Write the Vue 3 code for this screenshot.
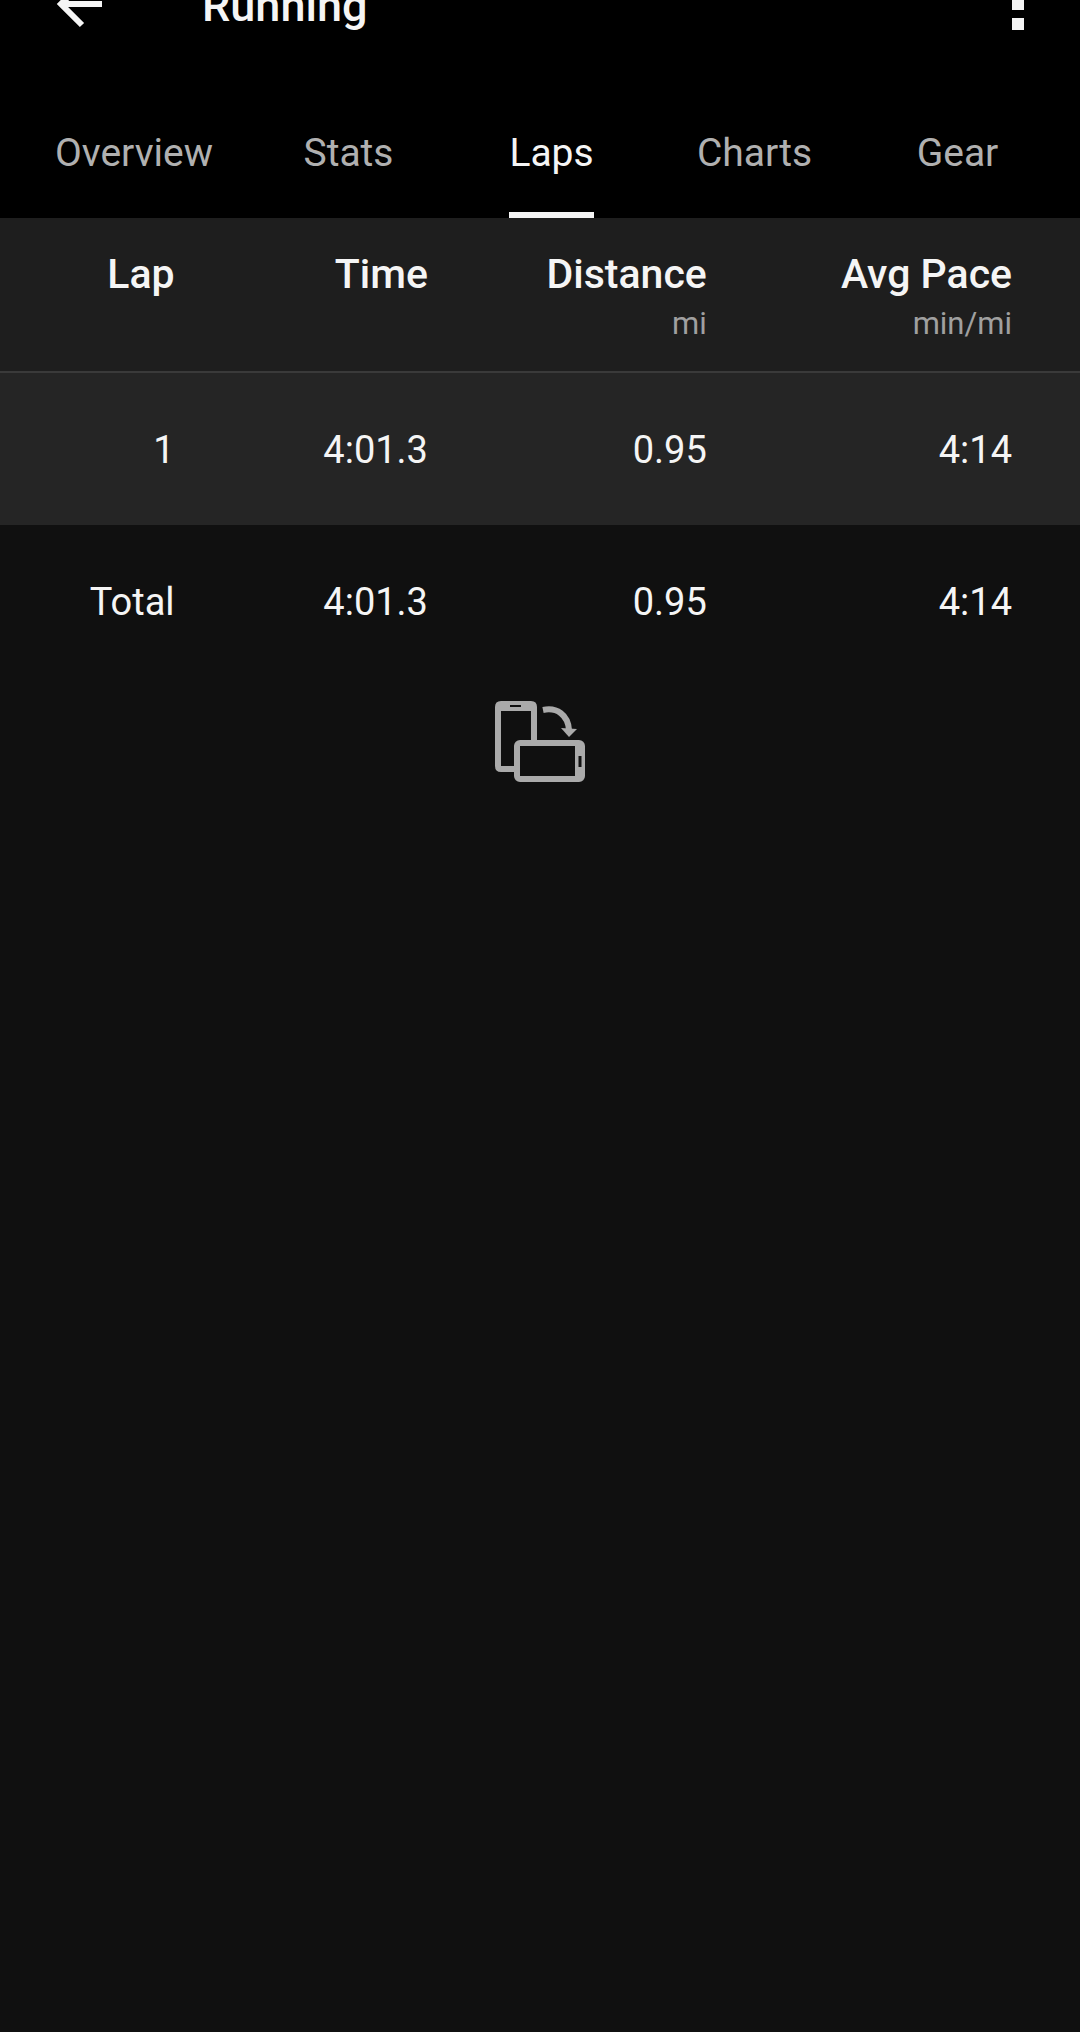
<script setup>
import { ref } from 'vue'

const tabs = ['Overview', 'Stats', 'Laps', 'Charts', 'Gear']
const active = ref('Laps')

const columns = [
  { key: 'lap', label: 'Lap', unit: '' },
  { key: 'time', label: 'Time', unit: '' },
  { key: 'distance', label: 'Distance', unit: 'mi' },
  { key: 'pace', label: 'Avg Pace', unit: 'min/mi' },
]
const laps = [{ lap: '1', time: '4:01.3', distance: '0.95', pace: '4:14' }]
const total = { lap: 'Total', time: '4:01.3', distance: '0.95', pace: '4:14' }
</script>

<template>
  <div class="screen">
    <header class="top">
      <div class="app-bar">
        <button class="icon-button" type="button" aria-label="Back">
          <svg width="48" height="48" viewBox="0 0 48 48" fill="none" stroke="currentColor" stroke-width="6">
            <path d="M46 24H7M26 3L5 24l21 21" />
          </svg>
        </button>
        <h1 class="title">Running</h1>
        <button class="icon-button" type="button" aria-label="More options">
          <svg width="12" height="52" viewBox="0 0 12 52" fill="currentColor">
            <path d="M0 0h12v12H0zM0 20h12v12H0zM0 40h12v12H0z" />
          </svg>
        </button>
      </div>
      <nav class="tabs" role="tablist">
        <button
          v-for="tab in tabs"
          :key="tab"
          class="tab"
          :class="{ active: tab === active }"
          type="button"
          role="tab"
          :aria-selected="tab === active"
          @click="active = tab"
        >
          <span class="tab-label">{{ tab }}</span>
        </button>
      </nav>
    </header>

    <main>
      <table class="laps">
        <colgroup>
          <col class="col-lap" />
          <col class="col-time" />
          <col class="col-distance" />
          <col class="col-pace" />
        </colgroup>
        <thead>
          <tr>
            <th v-for="c in columns" :key="c.key" scope="col">
              <div>{{ c.label }}</div>
              <div v-if="c.unit" class="unit">{{ c.unit }}</div>
            </th>
          </tr>
        </thead>
        <tbody>
          <tr v-for="row in laps" :key="row.lap">
            <td v-for="c in columns" :key="c.key">{{ row[c.key] }}</td>
          </tr>
        </tbody>
        <tfoot>
          <tr>
            <td v-for="c in columns" :key="c.key">{{ total[c.key] }}</td>
          </tr>
        </tfoot>
      </table>

      <div class="rotate-hint">
        <svg width="90" height="82" viewBox="0 0 90 82" fill="none" role="img" aria-label="Rotate device">
          <path d="M20 68H6Q3 68 3 65V6Q3 3 6 3H36Q39 3 39 6V40" stroke="currentColor" stroke-width="6" />
          <path d="M5 6H38" stroke="currentColor" stroke-width="8" />
          <path d="M15 5H26" stroke="#101010" stroke-width="2" />
          <rect x="22" y="42" width="65" height="36" rx="3" stroke="currentColor" stroke-width="6" />
          <path d="M84 42V78" stroke="currentColor" stroke-width="8" />
          <path d="M85 55V66" stroke="#101010" stroke-width="3" />
          <path d="M48 9C62 6 73 14 74 29" stroke="currentColor" stroke-width="6" />
          <path d="M66 27L82 28L74 36Z" fill="currentColor" />
        </svg>
      </div>
    </main>
  </div>
</template>

<style>
body {
  margin: 0;
  background: #101010;
}
</style>

<style scoped>
.screen {
  min-height: 100vh;
  overflow: hidden;
  background: #101010;
  color: #f5f5f5;
  font-family: Roboto, "Liberation Sans", sans-serif;
}

.top {
  background: #000;
}

/* The bar is scrolled halfway off the top edge. */
.app-bar {
  display: flex;
  align-items: center;
  height: 156px;
  margin-top: -74px;
  padding: 0 56px;
}

button {
  margin: 0;
  padding: 0;
  border: 0;
  background: none;
  color: inherit;
  font: inherit;
  cursor: pointer;
}

.icon-button {
  display: flex;
}

.title {
  flex: 1;
  margin: 0;
  padding: 4px 0 0 98px;
  font-size: 45px;
  font-weight: 500;
  line-height: 52px;
}

.tabs {
  display: grid;
  grid-template-columns: 226fr 203fr 203fr 203fr 203fr;
  height: 136px;
  padding: 0 21px;
}

.tab {
  display: flex;
  justify-content: center;
  align-items: stretch;
  color: #b0b0b0;
  font-size: 39px;
  line-height: 48px;
}

.tab-label {
  box-sizing: border-box;
  height: 136px;
  padding-top: 47px;
}

.active {
  color: #f5f5f5;
}

.active .tab-label {
  border-bottom: 6px solid #f5f5f5;
}

.laps {
  width: 100%;
  table-layout: fixed;
  border-collapse: collapse;
  text-align: right;
}

.col-lap { width: 17%; }
.col-time { width: 23%; }
.col-distance { width: 26%; }
.col-pace { width: 34%; }

th,
td {
  padding: 0 6px 0 0;
}

th:first-child,
td:first-child {
  padding-right: 9px;
}

th:nth-child(2),
td:nth-child(2) {
  padding-right: 4px;
}

th:last-child,
td:last-child {
  padding-right: 68px;
}

thead {
  background: #1e1e1e;
}

thead th {
  height: 122px;
  padding-top: 31px;
  border-bottom: 2px solid #3a3a3a;
  font-size: 41px;
  font-weight: 500;
  line-height: 50px;
  vertical-align: top;
}

.unit {
  color: #a0a0a0;
  font-size: 31px;
  font-weight: 400;
}

td {
  height: 150px;
  padding-top: 2px;
  font-size: 38px;
  line-height: 48px;
}

tbody {
  background: #252525;
}

.rotate-hint {
  display: flex;
  justify-content: center;
  margin-top: 24px;
  color: #aaa;
}
</style>
